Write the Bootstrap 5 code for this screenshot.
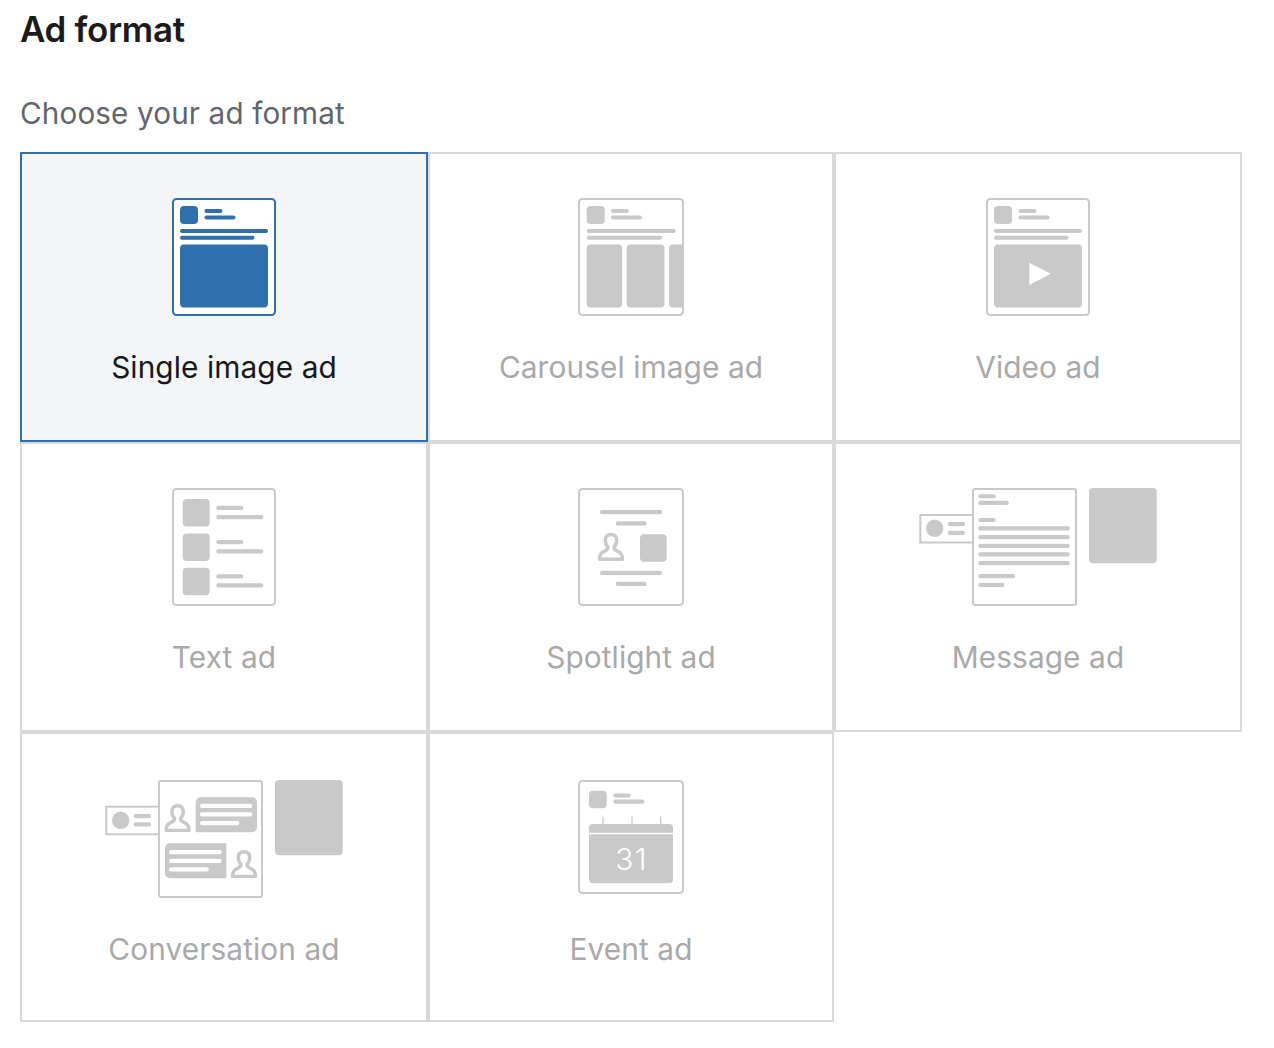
<!DOCTYPE html>
<html lang="en">
<head>
<meta charset="utf-8">
<title>Ad format</title>
<link rel="stylesheet" href="https://cdn.jsdelivr.net/npm/bootstrap@5.3.0/dist/css/bootstrap.min.css">
<style>
body { font-family: Inter, "Liberation Sans", sans-serif; background: #fff; }
.page-wrap { padding: 0 32px 0 20px; }
.page-title { font-size: 34.9px; line-height: 40px; font-weight: 600; color: #1b1b1b; margin: 9px 0 0; letter-spacing: -.3px; }
.page-sub { font-size: 29.7px; line-height: 40px; font-weight: 400; color: #62666a; margin: 44px 0 0; letter-spacing: .12px; height: 59px; }
.format-grid { grid-template-columns: 408px 406px 408px; }
.format-cell { height: 290px; border: 2px solid #d9d9d9; color: #c9c9c9; padding-top: 44px; }
.format-cell.is-picked { border-color: #2d70ad; background: #f4f5f7; color: #2d70ad; }
.format-cell.is-low { padding-top: 46px; }
.format-cell svg { display: block; margin: 0 auto; fill: currentColor; }
.format-cell .frame { fill: #fff; stroke: currentColor; stroke-width: 2; }
.outline { fill: none; stroke: #c9c9c9; stroke-width: 3.6; stroke-linejoin: round; }
.format-cell .hollow { fill: #fff; }
.format-cell .tick { fill: none; stroke: currentColor; stroke-width: 1.3; }
.format-cell .day { fill: #fff; font-size: 30px; font-weight: 300; letter-spacing: 1.5px; font-family: Inter, "Liberation Sans", sans-serif; }
.art-box { height: 120px; }
.format-name { font-size: 29.8px; line-height: 40px; color: #a9a9a9; margin-top: 29px; letter-spacing: .1px; }
.format-cell.is-picked .format-name { color: #15191e; }
</style>
</head>
<body>
<svg width="0" height="0" class="d-block position-absolute">
  <symbol id="person" viewBox="0 0 26.6 28.3">
    <path class="outline" d="M13.3 1.8C9.8 1.8 7.5 4 7.5 7.5C7.5 10.5 9 13 10.3 14.5C10.3 16.5 9 17.5 6.5 18.7C3 20.3 1.8 22 1.8 26.5H24.8C24.8 22 23.6 20.3 20.1 18.7C17.6 17.5 16.3 16.5 16.3 14.5C17.6 13 19.1 10.5 19.1 7.5C19.1 4 16.8 1.8 13.3 1.8Z"/>
  </symbol>
</svg>
<main class="page-wrap">
  <h1 class="page-title">Ad format</h1>
  <h2 class="page-sub">Choose your ad format</h2>
  <div class="d-grid format-grid">

    <div class="format-cell is-picked text-center">
      <div class="art-box">
      <svg width="104" height="118" viewBox="0 0 104 118">
        <rect class="frame" x="1" y="1" width="102" height="116" rx="3.5"/>
        <rect x="8" y="8" width="18" height="18" rx="4"/>
        <rect x="32.5" y="11" width="18" height="4" rx="2"/>
        <rect x="32.5" y="17.5" width="31" height="4" rx="2"/>
        <rect x="8" y="31" width="88" height="4" rx="2"/>
        <rect x="8" y="37.7" width="74.5" height="4" rx="2"/>
        <rect x="8" y="46.5" width="88" height="63" rx="4"/>
      </svg>
      </div>
      <div class="format-name">Single image ad</div>
    </div>

    <div class="format-cell text-center">
      <div class="art-box">
      <svg width="106" height="118" viewBox="0 0 106 118">
        <rect class="frame" x="1" y="1" width="104" height="116" rx="3.5"/>
        <rect x="8.7" y="8" width="18" height="18" rx="4"/>
        <rect x="33" y="11" width="18" height="4" rx="2"/>
        <rect x="33" y="17.5" width="31" height="4" rx="2"/>
        <rect x="8.7" y="31" width="89" height="4" rx="2"/>
        <rect x="8.7" y="37.7" width="75.5" height="4" rx="2"/>
        <rect x="8.7" y="46.5" width="35.5" height="63" rx="4"/>
        <rect x="48.7" y="46.5" width="37.8" height="63" rx="4"/>
        <path d="M95 46.5H105V109.5H95A4 4 0 0 1 91 105.5V50.5A4 4 0 0 1 95 46.5Z"/>
      </svg>
      </div>
      <div class="format-name">Carousel image ad</div>
    </div>

    <div class="format-cell text-center">
      <div class="art-box">
      <svg width="104" height="118" viewBox="0 0 104 118">
        <rect class="frame" x="1" y="1" width="102" height="116" rx="3.5"/>
        <rect x="8" y="8" width="18" height="18" rx="4"/>
        <rect x="32.5" y="11" width="18" height="4" rx="2"/>
        <rect x="32.5" y="17.5" width="31" height="4" rx="2"/>
        <rect x="8" y="31" width="88" height="4" rx="2"/>
        <rect x="8" y="37.7" width="74.5" height="4" rx="2"/>
        <rect x="8" y="46.5" width="88" height="63" rx="4"/>
        <polygon class="hollow" points="43.3,64.7 64.7,75.8 43.3,87"/>
      </svg>
      </div>
      <div class="format-name">Video ad</div>
    </div>

    <div class="format-cell text-center">
      <div class="art-box">
      <svg width="104" height="118" viewBox="0 0 104 118">
        <rect class="frame" x="1" y="1" width="102" height="116" rx="3.5"/>
        <rect x="10.7" y="11" width="27" height="27.5" rx="4"/>
        <rect x="10.7" y="45.5" width="27" height="27.5" rx="4"/>
        <rect x="10.7" y="79.7" width="27" height="27.5" rx="4"/>
        <rect x="44.3" y="17.7" width="27" height="4.3" rx="2"/>
        <rect x="44.3" y="27" width="47" height="4.3" rx="2"/>
        <rect x="44.3" y="52" width="27" height="4.3" rx="2"/>
        <rect x="44.3" y="61.3" width="47" height="4.3" rx="2"/>
        <rect x="44.3" y="86.3" width="27" height="4.3" rx="2"/>
        <rect x="44.3" y="95.3" width="47" height="4.3" rx="2"/>
      </svg>
      </div>
      <div class="format-name">Text ad</div>
    </div>

    <div class="format-cell text-center">
      <div class="art-box">
      <svg width="106" height="118" viewBox="0 0 106 118">
        <rect class="frame" x="1" y="1" width="104" height="116" rx="3.5"/>
        <rect x="22" y="22" width="62" height="4.3" rx="2"/>
        <rect x="37.7" y="33.3" width="31" height="4.3" rx="2"/>
        <use href="#person" x="19.7" y="44.7" width="26.6" height="28.3"/>
        <rect x="62" y="46.3" width="26.7" height="27.4" rx="4"/>
        <rect x="22" y="82.7" width="62" height="4.3" rx="2"/>
        <rect x="37.7" y="93.7" width="31" height="4.3" rx="2"/>
      </svg>
      </div>
      <div class="format-name">Spotlight ad</div>
    </div>

    <div class="format-cell text-center">
      <div class="art-box">
      <svg width="238" height="118" viewBox="919 488 238 118">
        <rect class="frame" x="920.3" y="515" width="60" height="27.5"/>
        <circle cx="934.7" cy="528.3" r="8.7"/>
        <rect x="947.7" y="522" width="17.3" height="4.3" rx="2"/>
        <rect x="947.7" y="530.7" width="17.3" height="4.3" rx="2"/>
        <rect class="frame" x="973" y="489" width="103" height="116" rx="2"/>
        <rect x="978.3" y="494.3" width="17.4" height="4" rx="2"/>
        <rect x="978.3" y="500.7" width="30.4" height="4.3" rx="2"/>
        <rect x="978.3" y="518" width="17.4" height="4" rx="2"/>
        <rect x="978.3" y="526.3" width="91.4" height="4.3" rx="2"/>
        <rect x="978.3" y="535" width="91.4" height="4.3" rx="2"/>
        <rect x="978.3" y="543.7" width="91.4" height="4.3" rx="2"/>
        <rect x="978.3" y="552.3" width="91.4" height="4.3" rx="2"/>
        <rect x="978.3" y="561" width="91.4" height="4.3" rx="2"/>
        <rect x="978.3" y="574" width="36.7" height="4.3" rx="2"/>
        <rect x="978.3" y="582.7" width="26" height="4.3" rx="2"/>
        <rect x="1089" y="488" width="67.7" height="75.3" rx="4"/>
      </svg>
      </div>
      <div class="format-name">Message ad</div>
    </div>

    <div class="format-cell is-low text-center">
      <div class="art-box">
      <svg width="238" height="118" viewBox="105 780 238 118">
        <rect class="frame" x="106.3" y="806.7" width="60" height="27.6"/>
        <circle cx="120.7" cy="820.3" r="8.7"/>
        <rect x="133.7" y="814" width="17.3" height="4.3" rx="2"/>
        <rect x="133.7" y="822.3" width="17.3" height="4.3" rx="2"/>
        <rect class="frame" x="159" y="781" width="103" height="116" rx="2"/>
        <use href="#person" x="164.3" y="804" width="26.6" height="28.3"/>
        <path d="M201 797.3H252A5 5 0 0 1 257 802.3V827.3A5 5 0 0 1 252 832.3H195.7V802.3A5 5 0 0 1 201 797.3Z"/>
        <rect class="hollow" x="200" y="803.7" width="52.3" height="4.3" rx="2"/>
        <rect class="hollow" x="200" y="812.3" width="52.3" height="4.3" rx="2"/>
        <rect class="hollow" x="200" y="821" width="39.3" height="4.3" rx="2"/>
        <path d="M170 843.3H226.3V878.3H170A5 5 0 0 1 165 873.3V848.3A5 5 0 0 1 170 843.3Z"/>
        <rect class="hollow" x="169" y="850" width="52.7" height="4.3" rx="2"/>
        <rect class="hollow" x="169" y="858.7" width="52.7" height="4.3" rx="2"/>
        <rect class="hollow" x="169" y="867.3" width="39.7" height="4.3" rx="2"/>
        <use href="#person" x="230.7" y="850" width="26.6" height="28.3"/>
        <rect x="275" y="780" width="67.7" height="75.3" rx="4"/>
      </svg>
      </div>
      <div class="format-name">Conversation ad</div>
    </div>

    <div class="format-cell is-low text-center">
      <div class="art-box">
      <svg width="106" height="115" viewBox="578 780 106 115">
        <rect class="frame" x="579" y="781" width="104" height="112" rx="3.5"/>
        <rect x="589" y="790.7" width="17.7" height="17.6" rx="4"/>
        <rect x="613.3" y="793.5" width="17.4" height="4" rx="2"/>
        <rect x="613.3" y="799.5" width="31" height="4.2" rx="2"/>
        <path d="M593 824H669A4 4 0 0 1 673 828V832.7H589V828A4 4 0 0 1 593 824Z"/>
        <path class="tick" d="M603 816.7V824M632 816.7V824M660.7 816.7V824"/>
        <path d="M589 834.3H673V879.3A4 4 0 0 1 669 883.3H593A4 4 0 0 1 589 879.3Z"/>
        <text class="day" x="631.7" y="869.5" text-anchor="middle">31</text>
      </svg>
      </div>
      <div class="format-name">Event ad</div>
    </div>

  </div>
</main>
<script src="https://cdn.jsdelivr.net/npm/bootstrap@5.3.0/dist/js/bootstrap.bundle.min.js"></script>
</body>
</html>
